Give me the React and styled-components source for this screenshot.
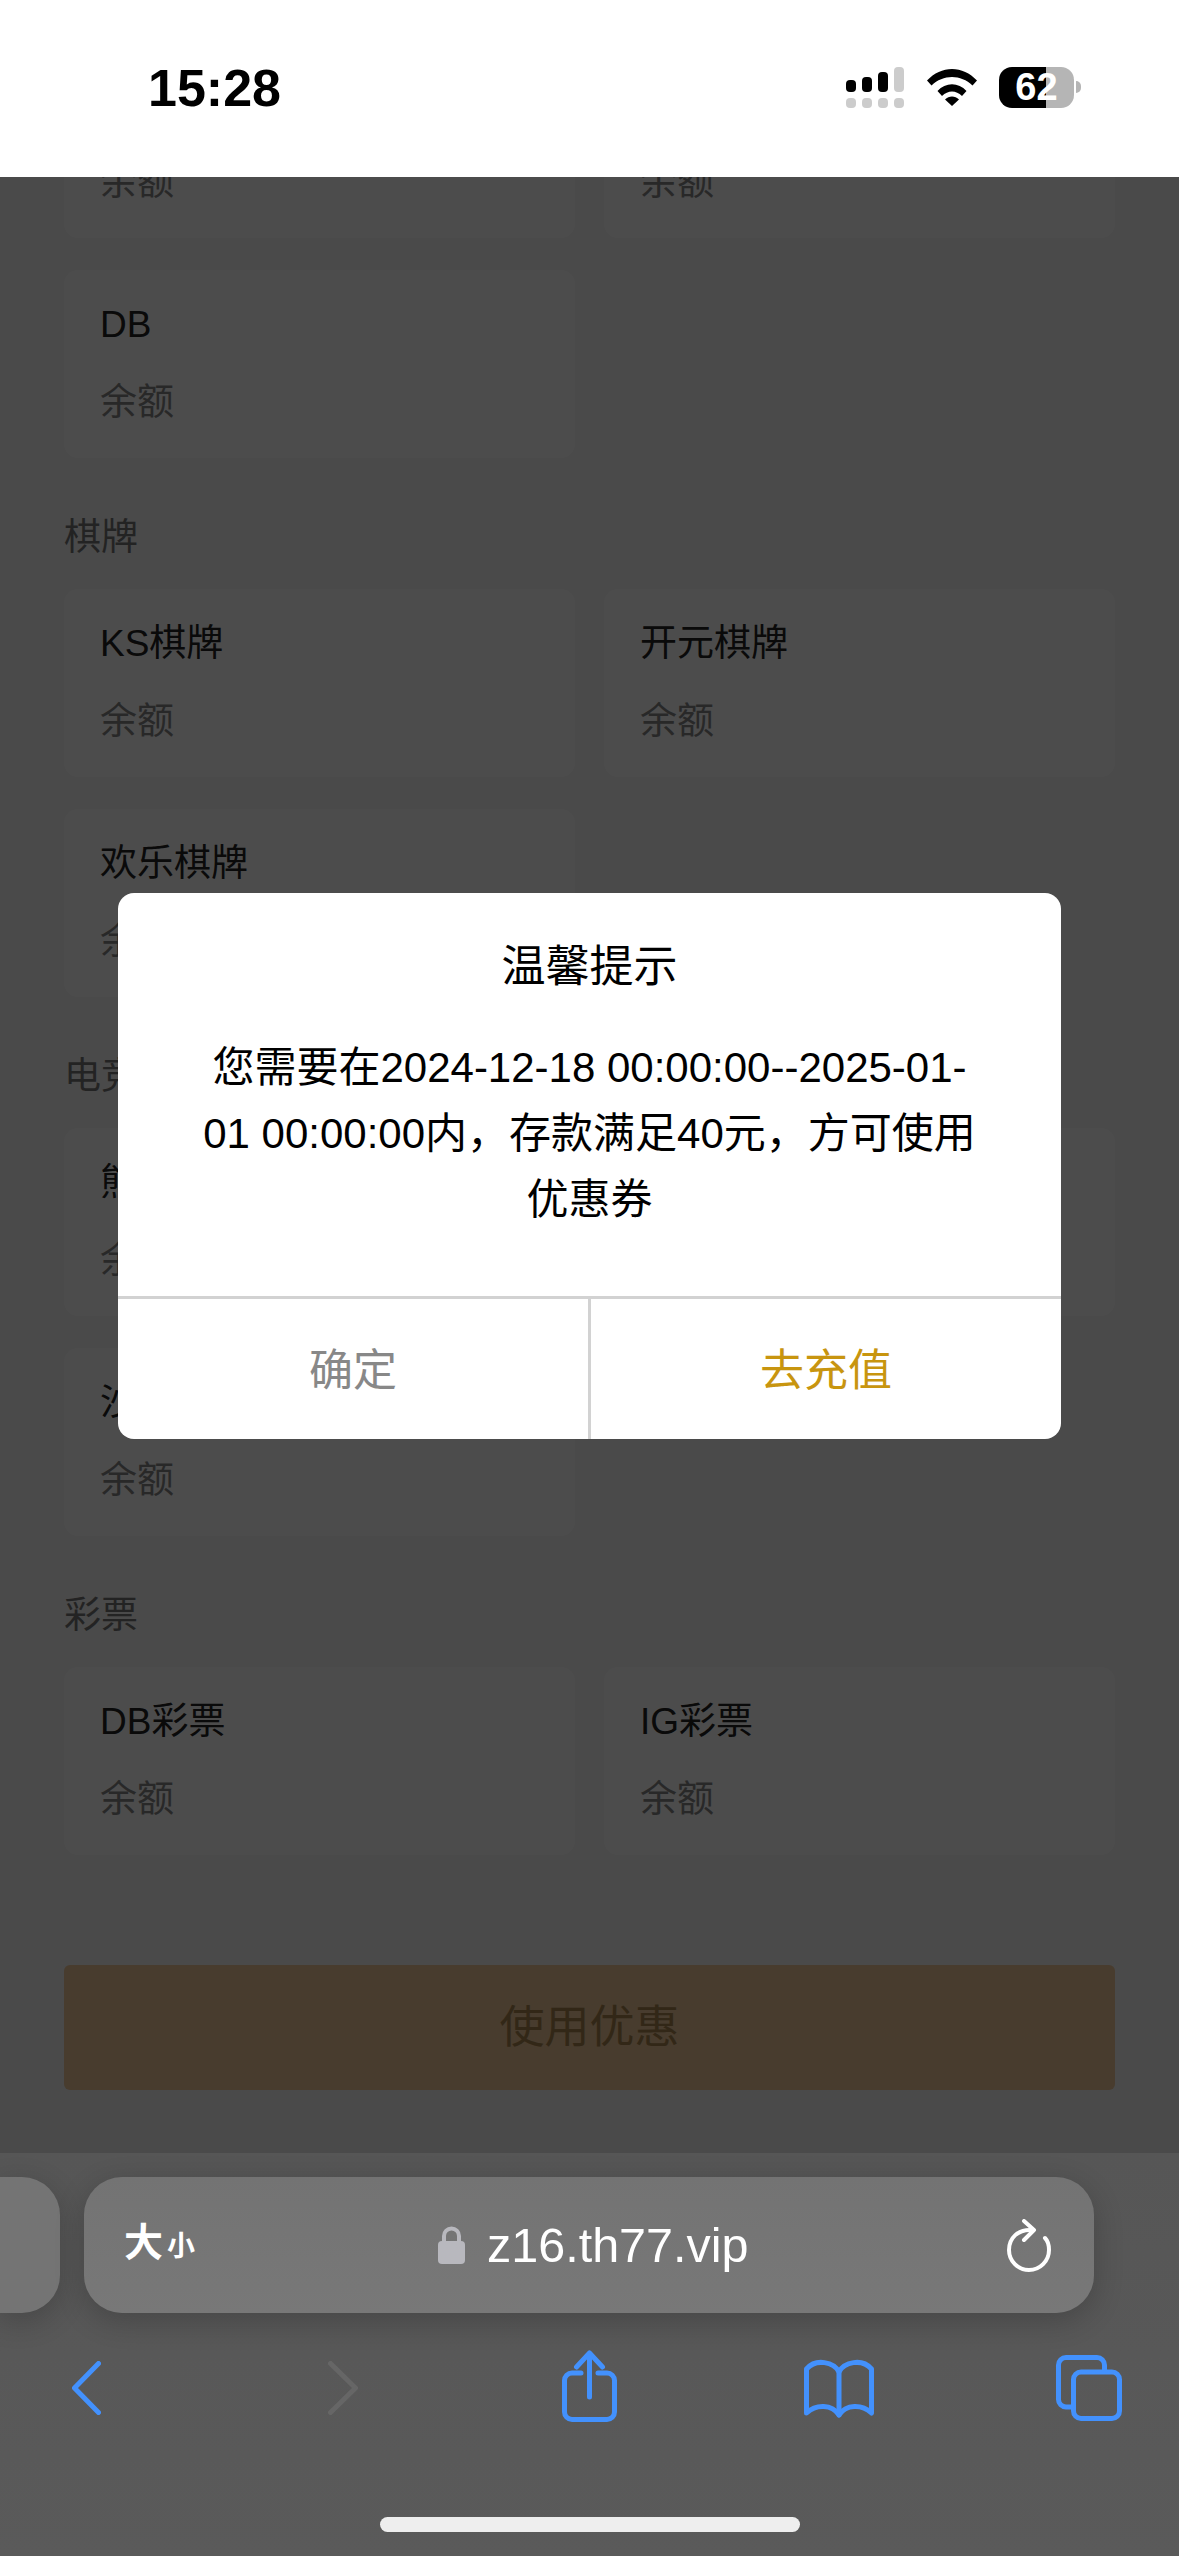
import React from 'react';
import styled, { createGlobalStyle } from 'styled-components';

const GlobalStyle = createGlobalStyle`
  html, body {
    margin: 0;
    padding: 0;
    background: #fff;
  }
  * {
    box-sizing: border-box;
  }
`;

const FONT = '"Liberation Sans", "Noto Sans CJK SC", sans-serif';

const Screen = styled.div`
  width: 1179px;
  height: 2556px;
  display: flex;
  flex-direction: column;
  overflow: hidden;
  font-family: ${FONT};
`;

const StatusBar = styled.div`
  height: 177px;
  flex: none;
  background: #fff;
  display: flex;
  align-items: flex-start;
  justify-content: space-between;
  padding: 60px 105px 0 148px;
  position: relative;
  z-index: 2;
`;

const Clock = styled.div`
  font-size: 52px;
  line-height: 56px;
  font-weight: 700;
  color: #000;
`;

const StatusIcons = styled.div`
  display: flex;
  align-items: flex-start;
  margin-top: 7px;
`;

const Battery = styled.div`
  width: 75px;
  height: 41px;
  margin-left: 22px;
  border-radius: 13px;
  background: linear-gradient(90deg, #000 0, #000 47px, #b5b5b5 47px);
  color: #fff;
  font-size: 38px;
  line-height: 41px;
  font-weight: 700;
  text-align: center;
  position: relative;

  &::after {
    content: '';
    position: absolute;
    left: 77px;
    top: 14px;
    width: 5px;
    height: 12px;
    border-radius: 0 6px 6px 0;
    background: #b5b5b5;
  }
`;

const Viewport = styled.div`
  flex: 1;
  position: relative;
  overflow: hidden;
  background: #f7f7f7;
`;

const Page = styled.div`
  margin-top: -127px;
  padding: 0 64px;
`;

const Section = styled.section`
  margin-bottom: 55px;
`;

const SectionTitle = styled.div`
  font-size: 37px;
  line-height: 50px;
  color: #777;
  margin-bottom: 26px;
`;

const CardGrid = styled.div`
  display: grid;
  grid-template-columns: 511px 511px;
  column-gap: 29px;
  row-gap: 32px;
`;

const Card = styled.div`
  height: 188px;
  padding: 30px 36px 0;
  border-radius: 14px;
  background: #fff;
`;

const CardName = styled.div`
  font-size: 37px;
  line-height: 50px;
  height: 50px;
  color: #222;
`;

const CardBalance = styled.div`
  margin-top: 28px;
  font-size: 37px;
  line-height: 50px;
  color: #888;
`;

const UseButton = styled.div`
  height: 125px;
  margin-top: 110px;
  border-radius: 6px;
  background: #f0c899;
  color: #a8844e;
  font-size: 45px;
  line-height: 125px;
  text-align: center;
`;

const Overlay = styled.div`
  position: absolute;
  inset: 0;
  padding-top: 2px;
  background: rgba(0, 0, 0, 0.7);
  display: flex;
  align-items: center;
  justify-content: center;
`;

const Dialog = styled.div`
  width: 943px;
  height: 546px;
  border-radius: 16px;
  background: #fff;
  display: flex;
  flex-direction: column;
  overflow: hidden;
`;

const DialogBody = styled.div`
  flex: 1;
  padding-top: 46px;
  text-align: center;
  color: #000;
`;

const DialogTitle = styled.div`
  font-size: 44px;
  line-height: 56px;
  margin-bottom: 40px;
`;

const DialogText = styled.div`
  font-size: 42px;
  line-height: 66px;
  white-space: nowrap;
`;

const DialogActions = styled.div`
  height: 143px;
  flex: none;
  display: flex;
  border-top: 3px solid #d2d2d2;
`;

const DialogAction = styled.div`
  flex: 1;
  font-size: 44px;
  line-height: 144px;
  text-align: center;
  color: ${(p) => p.$color};

  & + & {
    border-left: 3px solid #d2d2d2;
  }
`;

const SafariBar = styled.div`
  height: 403px;
  flex: none;
  position: relative;
  background: linear-gradient(180deg, #565656 0, #5a5a5a 100%);
`;

const AddressRow = styled.div`
  display: flex;
  gap: 24px;
  padding: 24px 85px 0 0;
`;

const PrevTab = styled.div`
  width: 60px;
  height: 136px;
  flex: none;
  border-radius: 0 38px 38px 0;
  background: #747474;
  box-shadow: 0 8px 30px rgba(0, 0, 0, 0.2);
`;

const AddressBar = styled.div`
  flex: 1;
  height: 136px;
  display: flex;
  align-items: center;
  padding: 0 43px 0 40px;
  border-radius: 38px;
  background: linear-gradient(180deg, #737373, #787878);
  box-shadow: 0 8px 30px rgba(0, 0, 0, 0.2);
  color: #fff;
`;

const TextSize = styled.div`
  width: 314px;
  font-size: 39px;
  line-height: 46px;
  font-weight: 700;

  small {
    font-size: 28px;
    margin-left: 4px;
  }
`;

const Url = styled.div`
  flex: 1;
  display: flex;
  align-items: center;
  gap: 22px;
  font-size: 48.500px;
  line-height: 58px;
`;

const NavRow = styled.div`
  display: grid;
  grid-template-columns: 256px 234px 242px 252px auto;
  align-items: start;
  height: 72px;
  margin-top: 24px;
  padding-left: 72px;
`;

const NavIcon = styled.svg`
  display: block;
  margin-top: ${(p) => p.$top}px;
  fill: none;
  stroke: ${(p) => p.$color || '#4391fd'};
  stroke-width: 5;
  stroke-linecap: round;
  stroke-linejoin: round;
`;

const HomeIndicator = styled.div`
  position: absolute;
  left: 380px;
  bottom: 24px;
  width: 420px;
  height: 15px;
  border-radius: 8px;
  background: #eee;
`;

const sections = [
  {
    title: '棋牌',
    cards: ['KS棋牌', '开元棋牌', '欢乐棋牌'],
  },
  {
    title: '电竞',
    cards: ['熊猫电竞', '雷火电竞', '沙巴电竞'],
  },
  {
    title: '彩票',
    cards: ['DB彩票', 'IG彩票'],
  },
];

const BalanceCard = ({ name }) => (
  <Card>
    <CardName>{name}</CardName>
    <CardBalance>余额</CardBalance>
  </Card>
);

const App = () => (
  <Screen>
    <GlobalStyle />
    <StatusBar>
      <Clock>15:28</Clock>
      <StatusIcons>
        <svg width="58" height="41" viewBox="0 0 58 41">
          <rect x="0" y="13" width="10" height="12" rx="4" fill="#000" />
          <rect x="16" y="10" width="10" height="15" rx="4" fill="#000" />
          <rect x="32" y="5" width="10" height="20" rx="4" fill="#000" />
          <rect x="48" y="0" width="10" height="25" rx="4" fill="#ccc" />
          <rect x="0" y="31" width="10" height="10" rx="4" fill="#ccc" />
          <rect x="16" y="31" width="10" height="10" rx="4" fill="#ccc" />
          <rect x="32" y="31" width="10" height="10" rx="4" fill="#ccc" />
          <rect x="48" y="31" width="10" height="10" rx="4" fill="#ccc" />
        </svg>
        <svg width="50" height="39" viewBox="0 0 50 39" style={{ marginLeft: 23 }}>
          <path d="M0 13.500C14 -2 36 -2 50 13.500L45.500 18.500C34 7 16 7 4.500 18.500Z" fill="#000" />
          <path d="M10.500 24C18.500 15 31.500 15 39.500 24L35 29C29 23 21 23 15 29Z" fill="#000" />
          <path d="M25 39L18 32.500C22 28.500 28 28.500 32 32.500Z" fill="#000" />
        </svg>
        <Battery>62</Battery>
      </StatusIcons>
    </StatusBar>

    <Viewport>
      <Page>
        <Section>
          <CardGrid>
            <BalanceCard />
            <BalanceCard />
            <BalanceCard name="DB" />
          </CardGrid>
        </Section>
        {sections.map((s) => (
          <Section key={s.title}>
            <SectionTitle>{s.title}</SectionTitle>
            <CardGrid>
              {s.cards.map((c) => <BalanceCard key={c} name={c} />)}
            </CardGrid>
          </Section>
        ))}
        <UseButton>使用优惠</UseButton>
      </Page>
      <Overlay>
        <Dialog>
          <DialogBody>
            <DialogTitle>温馨提示</DialogTitle>
            <DialogText>
              您需要在2024-12-18 00:00:00--2025-01-<br />
              01 00:00:00内，存款满足40元，方可使用<br />
              优惠券
            </DialogText>
          </DialogBody>
          <DialogActions>
            <DialogAction $color="#888">确定</DialogAction>
            <DialogAction $color="#c8950f">去充值</DialogAction>
          </DialogActions>
        </Dialog>
      </Overlay>
    </Viewport>

    <SafariBar>
      <AddressRow>
        <PrevTab />
        <AddressBar>
          <TextSize>大<small>小</small></TextSize>
          <Url>
            <svg width="27" height="38" viewBox="0 0 27 38">
              <path d="M6 17V10a7.500 7.500 0 0 1 15 0v7" fill="none" stroke="#b8b8be" strokeWidth="4" />
              <rect x="0" y="15" width="27" height="23" rx="4" fill="#b8b8be" />
            </svg>
            z16.th77.vip
          </Url>
          <svg width="44" height="53" viewBox="0 0 44 53" fill="none" stroke="#fff" strokeWidth="4" strokeLinecap="round" strokeLinejoin="round">
            <path d="M25 11C11 10 2 19 2 31a20 20 0 0 0 40 0c0-5-1-9-4-12" />
            <path d="M17 2l10 9-10 10" />
          </svg>
        </AddressBar>
      </AddressRow>
      <NavRow>
        <NavIcon $top={24} width="29" height="54" viewBox="0 0 29 54">
          <path d="M26.500 2.500L2.500 27l24 24.500" />
        </NavIcon>
        <NavIcon $top={24} $color="#666" width="30" height="54" viewBox="0 0 30 54">
          <path d="M2.500 2.500L27.500 27l-25 24.500" />
        </NavIcon>
        <NavIcon $top={13} width="55" height="72" viewBox="0 0 55 72">
          <path d="M19 23H10a7.500 7.500 0 0 0-7.500 7.500V62a7.500 7.500 0 0 0 7.500 7.500h35a7.500 7.500 0 0 0 7.500-7.500V30.500A7.500 7.500 0 0 0 45 23h-9" />
          <path d="M27.500 47V3M14.500 17L27.500 3l13 14" />
        </NavIcon>
        <NavIcon $top={21} width="70" height="60" viewBox="0 0 70 60">
          <path d="M35 14C30 4 12 0 2.500 11v44C12 46 28 46 35 57c7-11 23-11 32.500-2V11C58 0 40 4 35 14Z" />
          <path d="M35 14v43" />
        </NavIcon>
        <NavIcon $top={18} width="66" height="66" viewBox="0 0 66 66">
          <path d="M15 52H10a7.500 7.500 0 0 1-7.500-7.500V10A7.500 7.500 0 0 1 10 2.500h31a7.500 7.500 0 0 1 7.500 7.500v5" />
          <rect x="17.500" y="17" width="46" height="46.500" rx="7.500" />
        </NavIcon>
      </NavRow>
      <HomeIndicator />
    </SafariBar>
  </Screen>
);

export default App;
